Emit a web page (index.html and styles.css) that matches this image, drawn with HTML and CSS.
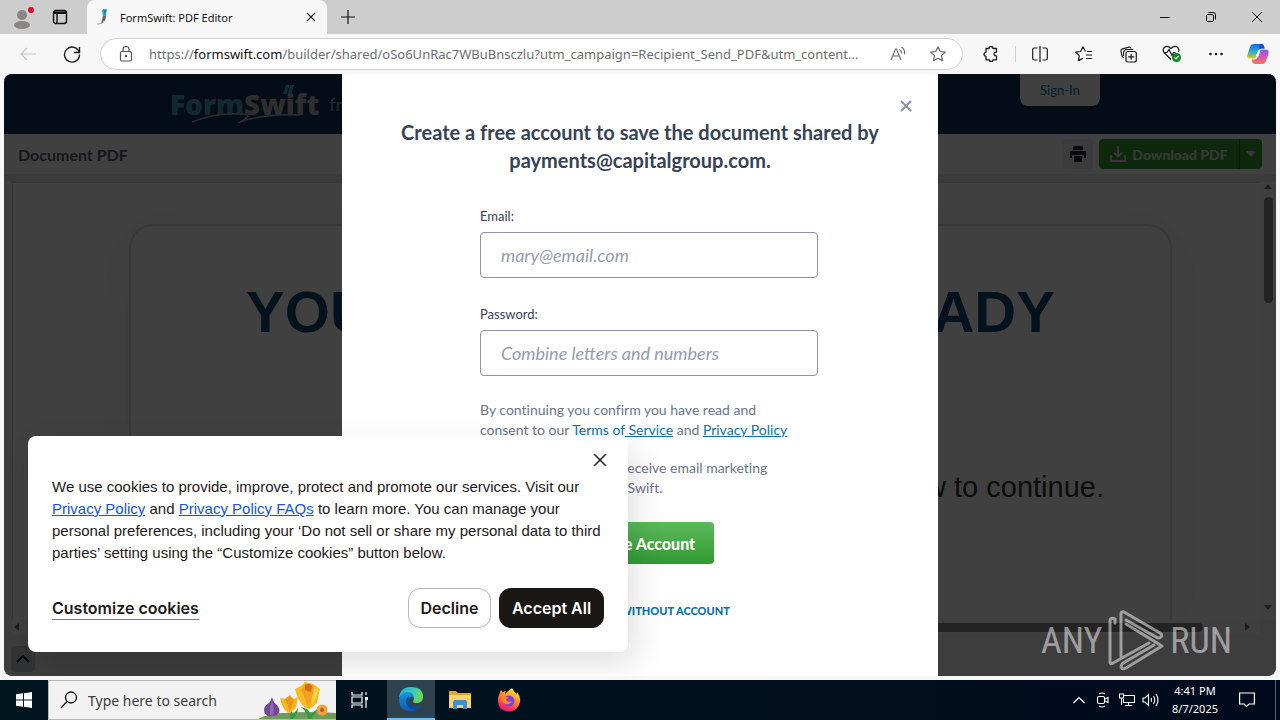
FILE: index.html
```html
<!DOCTYPE html>
<html lang="en">

<head>
    <meta charset="UTF-8">
    <meta name="viewport" content="width=device-width, initial-scale=1.0">
    <title>FormSwift: PDF Editor</title>
    <link rel="stylesheet" href="styles.css">
</head>

<body>
    <!-- Tab strip -->
    <div class="tab-strip">
        <button class="profile" aria-label="Profile">
            <svg width="26" height="26" viewBox="0 0 26 26"><circle cx="11" cy="11" r="5" fill="#8a8684"/><ellipse cx="11" cy="21" rx="8" ry="4" fill="#8a8684"/><circle cx="20" cy="6" r="3" fill="#d80f28"/></svg>
        </button>
        <button class="workspaces" aria-label="Tab actions">
            <svg width="16" height="16" viewBox="0 0 16 16" fill="none" stroke="#111" stroke-width="1.4"><rect x="1.5" y="1.5" width="13" height="13" rx="2.5"/><path d="M2 3.2h12M2 4.2h12M5 5v9"/></svg>
        </button>
        <div class="tab">
            <svg width="12" height="18" viewBox="0 0 12 18"><path d="M5 2l5-1-1 6-3 1z" fill="#2ba3cb"/><path d="M6 1l3 1-1 5" fill="#197ba8"/><path d="M6 8l3-1c0 4-1 7-5 9z" fill="#5d6367"/><path d="M0 16c3 0 5-1 7-3" fill="none" stroke="#aaa"/></svg>
            <span class="tab-title">FormSwift: PDF Editor</span>
            <button class="tab-close" aria-label="Close tab">
                <svg width="10" height="10" viewBox="0 0 10 10" stroke="#222" stroke-width="1.2"><path d="M1 1l8 8M9 1l-8 8"/></svg>
            </button>
        </div>
        <button class="new-tab" aria-label="New tab">
            <svg width="14" height="14" viewBox="0 0 14 14" stroke="#111" stroke-width="1.2"><path d="M7 0v14M0 7h14"/></svg>
        </button>
        <div class="window-controls">
            <button aria-label="Minimize"><svg width="10" height="10" viewBox="0 0 10 10" stroke="#111"><path d="M0 5.5h10"/></svg></button>
            <button aria-label="Restore"><svg width="10" height="10" viewBox="0 0 10 10" fill="none" stroke="#111"><rect x=".5" y="2.5" width="7" height="7" rx="1.5"/><path d="M2.5.5h5a2 2 0 0 1 2 2v5"/></svg></button>
            <button aria-label="Close"><svg width="10" height="10" viewBox="0 0 10 10" stroke="#111"><path d="M0 0l10 10M10 0L0 10"/></svg></button>
        </div>
    </div>

    <!-- Address bar -->
    <div class="toolbar">
        <button aria-label="Back"><svg width="16" height="14" viewBox="0 0 16 14" fill="none" stroke="#c6c6c6" stroke-width="1.2"><path d="M7 1L1 7l6 6M1 7h15"/></svg></button>
        <button aria-label="Refresh"><svg width="18" height="18" viewBox="0 0 18 18" fill="none" stroke="#1b1b1b" stroke-width="1.4"><path d="M16.2 7.5A7.5 7.5 0 1 0 16.5 9.5M16.5 2v5.5H11"/></svg></button>
        <div class="address">
            <svg class="lock" width="14" height="16" viewBox="0 0 14 16" fill="none" stroke="#555" stroke-width="1.2"><rect x="1.5" y="5.5" width="11" height="9.5" rx="1.5"/><path d="M4 5.5V3.5a3 3 0 0 1 6 0v2"/><circle cx="7" cy="10" r=".7" fill="#333"/></svg>
            <span class="url">https://<b>formswift.com</b>/builder/shared/oSo6UnRac7WBuBnsczlu?utm_campaign=Recipient_Send_PDF&amp;utm_content...</span>
            <button class="address-btn" aria-label="Read aloud"><svg width="16" height="16" viewBox="0 0 16 16" fill="none" stroke="#666" stroke-width="1.1"><path d="M1 14L5.5 3h1L11 14M2.5 10h7M9.5 3.5q2 1.2 2 4M11.5 1q3.5 2 3 7"/></svg></button>
            <button class="address-btn" aria-label="Add to favorites"><svg width="16" height="16" viewBox="0 0 16 16" fill="none" stroke="#666" stroke-width="1.2" stroke-linejoin="round"><path d="M8 .8l2.2 4.7 5.1.6-3.8 3.5 1 5.1L8 12.2l-4.5 2.5 1-5.1L.7 6.1l5.1-.6z"/></svg></button>
        </div>
        <button class="extensions" aria-label="Extensions"><svg width="16" height="16" viewBox="0 0 16 16" fill="none" stroke="#1b1b1b" stroke-width="1.3" stroke-linejoin="round"><path d="M6 2.5a2 2 0 0 1 4 0h3.5v3.7h-.7a1.8 1.8 0 0 0 0 3.6h.7v4h-3.5a1.8 1.8 0 0 1-3.6 0H3V10.3a2 2 0 1 1 0-4V2.5z"/></svg></button>
        <span class="separator"></span>
        <button aria-label="Split screen"><svg width="16" height="16" viewBox="0 0 16 16" fill="none" stroke="#1b1b1b" stroke-width="1.2"><path d="M5.5 2H2.2Q.7 2 .7 3.5v9Q.7 14 2.2 14h3.3M10.5 2h3.3q1.5 0 1.5 1.5v9q0 1.5-1.5 1.5h-3.3M8 0v16"/></svg></button>
        <button aria-label="Favorites"><svg width="18" height="16" viewBox="0 0 18 16" fill="none" stroke="#1b1b1b" stroke-width="1.2" stroke-linejoin="round"><path d="M10.5 5.5L8 .8 5.6 5.5.7 6.2l3.6 3.4-.8 5 4.5-2.3M12 5.5h5M11 9h6M11 12.5h6"/></svg></button>
        <button aria-label="Collections"><svg width="17" height="17" viewBox="0 0 17 17" fill="none" stroke="#1b1b1b" stroke-width="1.2"><path d="M4 12Q2 11 1.8 9.5L1 5Q.8 3.2 2.5 2.8L9 1.2q1.6-.3 2.2 1.3"/><path d="M13 3.5H7.5Q3.5 3.5 3.5 7v3"/><rect x="6" y="5.5" width="10.3" height="10.5" rx="2"/><path d="M11.2 7.8v6M8.2 10.8h6"/></svg></button>
        <button aria-label="Browser essentials"><svg width="20" height="18" viewBox="0 0 20 18" fill="none" stroke="#1b1b1b" stroke-width="1.2"><path d="M9 14.5L2.5 8Q0 5 2.2 2.5 5.5 0 9 3.5q3.5-3.5 6.8-1Q17.5 4.5 16.5 7M1.5 7.5H5l2-3 3 6 1.5-3h2"/><circle cx="14.5" cy="12.5" r="4.5" fill="#0e8420" stroke="none"/><path d="M12.5 12.5l1.5 1.5 2.7-3" stroke="#fff"/></svg></button>
        <button aria-label="Settings and more"><svg width="16" height="4" viewBox="0 0 16 4" fill="#1b1b1b"><circle cx="2.5" cy="2" r="1.3"/><circle cx="8" cy="2" r="1.3"/><circle cx="13.5" cy="2" r="1.3"/></svg></button>
        <button class="copilot" aria-label="Copilot">
            <svg width="22" height="22" viewBox="0 0 22 22">
                <defs>
                    <linearGradient id="cpA" x1="0" y1="0" x2="0" y2="1"><stop offset="0" stop-color="#1568dd"/><stop offset=".5" stop-color="#28a9d8"/><stop offset=".8" stop-color="#8cc152"/><stop offset="1" stop-color="#f5c518"/></linearGradient>
                    <linearGradient id="cpB" x1="0" y1="0" x2="0" y2="1"><stop offset="0" stop-color="#8b5cf0"/><stop offset=".5" stop-color="#d452b8"/><stop offset="1" stop-color="#fb7b3c"/></linearGradient>
                </defs>
                <path d="M7 1h7q2 0 2.6 2l.7 2.5h-3Q12 5.5 11.4 8L10 13q-.7 2.5-3 2.5H3Q-.5 15.5.6 11L3 4Q4 1 7 1z" fill="url(#cpA)"/>
                <path d="M15 21H8q-2 0-2.6-2l-.6-2.5h2.7q2.2 0 3-2.5L12 9q.7-2.5 3-2.5h4q3.5 0 2.4 4.5L19 18q-1 3-4 3z" fill="url(#cpB)"/>
                <path d="M12.5 1h2q2 0 2.5 2l.7 2.5H14q-1.3 0-2 1z" fill="#1a4fc4"/>
                <path d="M11 7.500h2.500L11 14.500H8.500z" fill="#fff"/>
            </svg>
        </button>
    </div>

    <!-- Page -->
    <main class="page">
        <header class="site-header">
            <a class="logo" href="#"><span class="logo-form">Form</span><span class="logo-swift">Swift</span>
                <svg class="logo-mark" width="130" height="40" viewBox="0 0 130 40" fill="none"><path d="M94 0h8l-3 9h-8z" fill="#47b5bd"/><path d="M98 0l-3 9" stroke="#12305c"/><path d="M0 37Q25 27 50 29q12 1-2 8 28-9 60-7Q70 28 46 38" stroke="#a7adb3" stroke-width="1.5"/></svg>
            </a>
            <span class="from">from Dropbox</span>
            <a class="sign-in" href="#">Sign-In</a>
        </header>
        <div class="doc-bar">
            <h1>Document PDF</h1>
            <button class="print" aria-label="Print"><svg width="16" height="16" viewBox="0 0 16 16" fill="#1c2333"><path d="M4 0h8q1 0 1 1v3H3V1q0-1 1-1zM1 5h14q1 0 1 1v6h-2V9H2v3H0V6q0-1 1-1zM4 10h8v5q0 1-1 1H5q-1 0-1-1z"/></svg></button>
            <div class="download-group">
                <button class="download"><svg width="16" height="16" viewBox="0 0 16 16" fill="none" stroke="#ddd" stroke-width="1.8"><path d="M8 0v10M4 6.5l4 4 4-4M1 9v6h14V9"/></svg>Download PDF</button>
                <button class="download-more" aria-label="More formats"><svg width="10" height="6" viewBox="0 0 10 6" fill="#ddd"><path d="M0 0h10L5 6z"/></svg></button>
            </div>
        </div>
        <div class="viewer">
            <div class="sheet">
                <div class="card">
                    <h2>YOUR DOCUMENT IS READY</h2>
                    <p>Please review it below to continue.</p>
                </div>
            </div>
            <div class="scroll-v">
                <svg width="8" height="5" viewBox="0 0 8 5"><path d="M0 5h8L4 0z"/></svg>
                <span class="thumb"></span>
                <svg class="arrow-end" width="8" height="5" viewBox="0 0 8 5"><path d="M0 0h8L4 5z"/></svg>
            </div>
            <div class="scroll-h">
                <svg width="5" height="8" viewBox="0 0 5 8"><path d="M5 0v8L0 4z"/></svg>
                <span class="thumb"></span>
                <svg class="arrow-end" width="5" height="8" viewBox="0 0 5 8"><path d="M0 0v8l5-4z"/></svg>
            </div>
        </div>
        <footer class="site-footer">
            <button aria-label="Expand"><svg width="14" height="8" viewBox="0 0 14 8" fill="none" stroke="#101c30" stroke-width="2"><path d="M1 7l6-6 6 6"/></svg></button>
        </footer>

        <div class="backdrop"></div>

        <!-- Sign up modal -->
        <section class="modal">
            <button class="modal-close" aria-label="Close"><svg width="12" height="12" viewBox="0 0 12 12" stroke="#8791a6" stroke-width="2"><path d="M1 1l10 10M11 1L1 11"/></svg></button>
            <h2>Create a free account to save the document shared by payments@capitalgroup.com.</h2>
            <form>
                <label for="email">Email:</label>
                <input id="email" type="email" placeholder="mary@email.com">
                <label for="password">Password:</label>
                <input id="password" type="password" placeholder="Combine letters and numbers">
                <p>By continuing you confirm you have read and<br>consent to our <a href="#">Terms of<u> Service</u></a> and <a href="#"><u>Privacy Policy</u></a></p>
                <p>You agree that you will receive email marketing<br>communication by FormSwift.</p>
                <button class="create" type="button">Create Account</button>
                <a class="skip" href="#">DOWNLOAD WITHOUT ACCOUNT</a>
            </form>
        </section>

        <!-- Cookie banner -->
        <section class="cookies">
            <button class="cookies-close" aria-label="Close"><svg width="12" height="12" viewBox="0 0 12 12" stroke="#1e1919" stroke-width="1.5"><path d="M0 0l12 12M12 0L0 12"/></svg></button>
            <p>We use cookies to provide, improve, protect and promote our services. Visit our<br><a href="#">Privacy Policy</a> and <a href="#">Privacy Policy FAQs</a> to learn more. You can manage your<br>personal preferences, including your ‘Do not sell or share my personal data to third<br>parties’ setting using the “Customize cookies” button below.</p>
            <div class="cookies-actions">
                <button class="customize">Customize cookies</button>
                <button class="decline">Decline</button>
                <button class="accept">Accept All</button>
            </div>
        </section>

        <div class="watermark">
            <span>ANY</span>
            <svg width="56" height="62" viewBox="0 0 56 62" fill="none" stroke="#fff" stroke-width="3" stroke-linejoin="round" stroke-linecap="round"><path d="M13 46V4q0-3 3-2l36 21q3 2 1 4t-5 0L18 10M7 9Q2 7 2 11v41q0 3 3 1l36-20M7 9v4M18 14l36 22-36 22q-4 2-5-1M13 57q0-3 4-5l29-17"/></svg>
            <span>RUN</span>
        </div>
    </main>

    <!-- Taskbar -->
    <nav class="taskbar">
        <button class="start" aria-label="Start"><svg width="16" height="16" viewBox="0 0 16 16" fill="#fff"><path d="M0 2.3L7 1.3v6.3H0zM8 1.2L16 0v7.6H8zM0 8.4h7v6.3l-7-1zM8 8.4h8V16l-8-1.2z"/></svg></button>
        <div class="search">
            <svg width="18" height="18" viewBox="0 0 18 18" fill="none" stroke="#111" stroke-width="1.3"><circle cx="11" cy="6.5" r="5.5"/><path d="M7 10.5L1 17"/></svg>
            <input type="text" aria-label="Search" placeholder="Type here to search">
            <svg class="flowers" width="80" height="38" viewBox="0 0 80 38">
                <path d="M2 38Q14 31 30 32q22-2 50 0v6z" fill="#6e9a5a"/>
                <path d="M34 38q1-6-2-9l3-1 2 6 5-7q0 6-5 11zM52 38q0-6-7-12l6 2q3 3 4 6 5-7 12-7-10 5-12 11z" fill="#2f9b43"/>
                <path d="M16 16q1 5 5 8 6 8-3 11-10 1-10-6 0-4 5-7 2-2 3-6z" fill="#6d4a92"/><path d="M16 20q-3 6-2 14l3 1q2-8-1-15z" fill="#8c68b2"/>
                <path d="M24 17l5 1 5-4 4 4 4-2-2 11-6 5q-7-1-10-15z" fill="#f9b41e"/><path d="M29 18l4-3 5 4-4 11z" fill="#ed941b"/>
                <path d="M39 8l6-3 4-4 8 2 7 5-3 14-7 6q-10-1-15-20z" fill="#fbbb20"/><path d="M45 9l5-7 7 2 1 6-5 17z" fill="#f3a01d"/><path d="M49 4q4-3 7 1l-1 6-6-2z" fill="#db6818"/><path d="M58 7l5 2-8 18z" fill="#ffd248"/>
                <circle cx="66" cy="29" r="5.5" fill="#f1a33b"/><circle cx="66" cy="29" r="2" fill="#b85c17"/>
            </svg>
        </div>
        <button class="task-view" aria-label="Task view"><svg width="18" height="16" viewBox="0 0 18 16" fill="none" stroke="#fff" stroke-width="1.2"><path d="M1 0v3h10V0M1 16v-3h10v3M1 5h10v6H1zM15 0v3M15 8v8"/><path d="M14 5h3v3h-3z" fill="#fff" stroke="none"/></svg></button>
        <button class="app active" aria-label="Microsoft Edge">
            <svg width="24" height="24" viewBox="0 0 24 24">
                <defs>
                    <linearGradient id="edA" x1="0" y1="0" x2="1" y2=".4"><stop offset="0" stop-color="#22a8e8"/><stop offset=".6" stop-color="#38cfb8"/><stop offset="1" stop-color="#68d957"/></linearGradient>
                    <linearGradient id="edB" x1="0" y1="0" x2="0" y2="1"><stop offset="0" stop-color="#1795dd"/><stop offset="1" stop-color="#0d59b4"/></linearGradient>
                </defs>
                <path d="M0 11Q1 0 12 0q12 0 12 10 0 6-7 6-4 0-2.5-2.5Q16 10 12 7 5 3 0 11z" fill="url(#edA)"/>
                <path d="M0 12q2-7 8-7 6 0 7 5-6-1-6 5 1 6 8 5 3 0 5-2-4 6-10 6Q0 24 0 12z" fill="url(#edB)"/>
                <path d="M10 9Q5 12 8 18q3 5 9 5 4-2 6-5-6 3-11 0-4-3-2-9z" fill="#0c4a9c"/>
            </svg>
        </button>
        <button class="app" aria-label="File Explorer">
            <svg width="22" height="20" viewBox="0 0 22 20"><path d="M0 2Q0 1 1 1h6l2 2h12q1 0 1 1v14H0z" fill="#e9a620"/><path d="M0 5h22v13H0z" fill="#fbd46a"/><path d="M4 19v-7q0-2 2-2h10q2 0 2 2v7h-4v-4H8v4z" fill="#3f8fd0"/></svg>
        </button>
        <button class="app" aria-label="Firefox">
            <svg width="24" height="24" viewBox="0 0 24 24">
                <defs><linearGradient id="ff" x1=".8" y1="0" x2=".3" y2="1"><stop offset="0" stop-color="#fff04a"/><stop offset=".4" stop-color="#ff9a1f"/><stop offset=".75" stop-color="#ff3f4c"/><stop offset="1" stop-color="#e31587"/></linearGradient></defs>
                <path d="M15 0q2 4 5 6-.5-1 0-2 4 5 3 10-2 9-11 9.5Q2 23 1 14q-.5-5 2-9 0-2 1-3 1 1 1.5 2.5Q7 3 9 3q-1 1-1 3 4-4 7-6z" fill="url(#ff)"/>
                <circle cx="12" cy="13" r="5.5" fill="#7f3fe0"/><path d="M4 10q4-2 8 0-3 0-3 2 2 3 6 1-2 4-6 3-4-1-5-6z" fill="#ff8a1d"/>
            </svg>
        </button>
        <div class="tray">
            <button aria-label="Show hidden icons"><svg width="12" height="8" viewBox="0 0 12 8" fill="none" stroke="#fff" stroke-width="1.2"><path d="M.5 7L6 1.5 11.5 7"/></svg></button>
            <button aria-label="Meet now"><svg width="14" height="16" viewBox="0 0 14 16" fill="none" stroke="#fff" stroke-width="1.1"><rect x="1.5" y="4.5" width="7" height="7" rx="1.5"/><path d="M9 7l3-1.5v5L9 9M3 2q3-2 6 0M3 14q3 2 6 0"/></svg></button>
            <button aria-label="Network"><svg width="16" height="14" viewBox="0 0 16 14" fill="none" stroke="#fff" stroke-width="1.1"><path d="M5 2.5h10.5v7H4.5V6M9.5 9.5v3M6 12.5h7M.5 1h4v4h-4zM2.5 5v7"/></svg></button>
            <button aria-label="Volume"><svg width="18" height="14" viewBox="0 0 18 14" fill="none" stroke="#fff" stroke-width="1.1"><path d="M1 5h2l3.5-3.5v11L3 9H1zM9 5q1 2 0 4M11.5 3q2.5 4 0 8M14 1q4 6 0 12"/></svg></button>
            <div class="clock"><span>4:41 PM</span><span>8/7/2025</span></div>
            <button class="notifications" aria-label="Notifications"><svg width="16" height="16" viewBox="0 0 16 16" fill="none" stroke="#fff" stroke-width="1.2"><path d="M.6 1h14.8v11H10l-2.5 2.5L5 12H.6z"/></svg></button>
            <span class="show-desktop"></span>
        </div>
    </nav>
</body>

</html>
```
FILE: styles.css
```css
* {
    margin: 0;
    padding: 0;
    box-sizing: border-box;
}

body {
    font-family: Lato, sans-serif;
    font-variant-ligatures: none;
    background: #f7f7f7;
    height: 100vh;
    display: flex;
    flex-direction: column;
    overflow: hidden;
}

button {
    background: none;
    border: none;
    font-family: inherit;
    display: flex;
    align-items: center;
    justify-content: center;
    flex-shrink: 0;
    cursor: pointer;
}

svg {
    flex-shrink: 0;
}

/* TAB STRIP */
.tab-strip {
    height: 34px;
    background: #cdcdcd;
    display: flex;
    font-family: "Noto Sans", "Open Sans", sans-serif;
}

.profile {
    width: 48px;
}

.workspaces {
    width: 24px;
}

.tab {
    width: 240px;
    margin-left: 15px;
    padding: 0 10px;
    background: #f7f7f7;
    border-radius: 8px 8px 0 0;
    display: flex;
    align-items: center;
}

.tab-title {
    margin-left: 11px;
    flex: 1;
    font-size: 11px;
    color: #111;
    white-space: nowrap;
}

.tab-close {
    width: 12px;
    height: 24px;
}

.new-tab {
    width: 42px;
}

.window-controls {
    margin-left: auto;
    display: flex;
}

.window-controls button {
    width: 46px;
}

/* TOOLBAR */
.toolbar {
    height: 40px;
    padding: 0 2px 0 6px;
    display: flex;
    align-items: center;
}

.toolbar > button {
    width: 44px;
    height: 32px;
}

.toolbar > .copilot {
    width: 40px;
}

.address {
    flex: 1;
    min-width: 0;
    height: 32px;
    margin: 0 6px;
    padding: 0 4px 0 18px;
    background: #fff;
    border: 1px solid #d2d2d2;
    border-radius: 16px;
    display: flex;
    align-items: center;
}

.url {
    flex: 1;
    min-width: 0;
    margin-left: 16px;
    font-family: "Noto Sans", "Open Sans", sans-serif;
    font-size: 13px;
    color: #6e6e6e;
    white-space: nowrap;
    overflow: hidden;
}

.url b {
    font-weight: 400;
    color: #111;
}

.address-btn {
    width: 40px;
    height: 28px;
}

.separator {
    width: 1px;
    height: 16px;
    margin: 0 2px;
    background: #cfcfcf;
}

/* PAGE */
.page {
    position: relative;
    flex: 1;
    min-height: 0;
    margin: 0 4px 4px;
    border-radius: 8px;
    overflow: hidden;
    background: #fff;
    display: flex;
    flex-direction: column;
}

.site-header {
    height: 60px;
    padding: 0 176px 0 166px;
    background: #12305c;
    display: flex;
    align-items: center;
}

.logo {
    position: relative;
    font-family: "Open Sans", sans-serif;
    font-size: 28px;
    font-weight: 800;
    text-decoration: none;
}

.logo-form {
    color: #47a5b5;
}

.logo-swift {
    color: #b4b8bc;
}

.logo-mark {
    position: absolute;
    left: 22px;
    top: 0;
}

.from {
    margin-left: 10px;
    font-size: 18px;
    color: #979da3;
}

.sign-in {
    align-self: flex-start;
    margin-left: auto;
    width: 80px;
    line-height: 32px;
    text-align: center;
    font-size: 13px;
    color: #0d6fb0;
    background: #fff;
    border-radius: 0 0 8px 8px;
    text-decoration: none;
}

.doc-bar {
    height: 40px;
    padding: 0 14px;
    display: flex;
    align-items: center;
}

.doc-bar h1 {
    flex: 1;
    font-size: 16px;
    color: #5a5d6c;
}

.print {
    width: 30px;
    height: 30px;
    margin-right: 6px;
    background: #eeeef6;
    border-radius: 4px;
}

.download-group {
    display: flex;
    height: 30px;
    background: #35a035;
    border-radius: 4px;
}

.download {
    width: 140px;
    gap: 6px;
    color: #ddd;
    font-size: 14px;
    font-weight: 900;
}

.download-more {
    width: 23px;
    border-left: 1px solid #1b6d1b;
}

.viewer {
    flex: 1;
    min-height: 0;
    display: grid;
    grid-template-columns: 1fr 16px;
    grid-template-rows: 1fr 14px;
    padding-left: 8px;
    background: #f4f4f4;
    border-top: 8px solid #ececec;
}

.sheet {
    background: #fff;
    border: 1px solid #dcdcdc;
    border-width: 1px 0 0 1px;
    padding: 41px 88px 0 116px;
    overflow: hidden;
}

.card {
    height: 100%;
    border: 2px solid #e4e4e4;
    border-bottom: none;
    border-radius: 24px 24px 0 0;
    box-shadow: 0 8px 60px rgba(0, 0, 0, 0.06);
    font-family: "Liberation Sans", Arial, sans-serif;
}

.card h2 {
    margin-top: 52px;
    text-align: center;
    font-size: 58px;
    line-height: 68px;
    white-space: nowrap;
    color: #0f4874;
}

.card p {
    margin-top: 124px;
    padding-right: 66px;
    text-align: right;
    font-size: 29px;
    line-height: 34px;
    color: #333;
}

.scroll-v,
.scroll-h {
    display: flex;
    align-items: center;
    background: #fcfcfc;
    fill: #777;
}

.scroll-v {
    flex-direction: column;
    padding: 2px 0 10px;
    gap: 8px;
}

.scroll-v .thumb {
    width: 9px;
    height: 106px;
    border-radius: 5px;
    background: #8c8c8c;
}

.scroll-h {
    padding: 0 10px 0 2px;
    gap: 10px;
}

.scroll-h .thumb {
    width: 95%;
    height: 9px;
    border-radius: 5px;
    background: #8c8c8c;
}

.scroll-v .arrow-end {
    margin-top: auto;
}

.scroll-h .arrow-end {
    margin-left: auto;
}

.site-footer {
    height: 42px;
    padding: 0 7px;
    display: flex;
    align-items: center;
    background: #f4f4f4;
}

.site-footer button {
    width: 24px;
    height: 26px;
    margin-top: 8px;
    background: #c8ccd4;
    border-radius: 4px;
}

.backdrop {
    position: absolute;
    inset: 0;
    background: rgba(0, 0, 0, 0.75);
}

/* MODAL */
.modal {
    position: absolute;
    top: 0;
    bottom: 0;
    left: 50%;
    width: 596px;
    margin-left: -298px;
    padding: 44px 48px 0;
    background: #fff;
}

.modal-close {
    position: absolute;
    top: 22px;
    right: 22px;
    width: 20px;
    height: 20px;
}

.modal h2 {
    text-align: center;
    font-size: 20px;
    line-height: 28px;
    color: #364257;
}

.modal form {
    margin: 32px 90px 0;
    display: flex;
    flex-direction: column;
}

.modal label {
    font-size: 13px;
    line-height: 20px;
    color: #364257;
}

.modal input + label {
    margin-top: 2px;
}

.modal input {
    width: 338px;
    height: 46px;
    margin: 6px 0 24px;
    padding: 0 20px;
    border: 1px solid #8f95a6;
    border-radius: 4px;
    font-family: inherit;
    font-size: 18px;
    color: #364257;
}

.modal input::placeholder {
    font-style: italic;
    color: #949cb0;
}

.modal p {
    margin-bottom: 18px;
    font-size: 14px;
    line-height: 20px;
    color: #6b7589;
    white-space: nowrap;
}

.modal a {
    color: #0d6fa8;
    text-decoration: none;
}

.modal .create {
    align-self: center;
    width: 148px;
    height: 42px;
    margin: 6px 0 36px;
    color: #fff;
    font-size: 16px;
    font-weight: 900;
    white-space: nowrap;
    background: linear-gradient(#5cba5c, #319a31);
    border-radius: 4px;
}

.modal .skip {
    align-self: center;
    font-size: 11px;
    line-height: 22px;
    font-weight: 900;
}

/* COOKIE BANNER */
.cookies {
    position: absolute;
    left: 24px;
    bottom: 24px;
    width: 600px;
    padding: 40px 24px 24px;
    background: #fff;
    border-radius: 8px;
    box-shadow: 8px 12px 32px rgba(0, 0, 0, 0.12);
    font-family: "Liberation Sans", Arial, sans-serif;
    color: #1e1919;
}

.cookies-close {
    position: absolute;
    top: 14px;
    right: 18px;
    width: 20px;
    height: 20px;
}

.cookies p {
    font-size: 15px;
    line-height: 22px;
    white-space: nowrap;
}

.cookies p a {
    color: #0f56e0;
}

.cookies-actions {
    margin-top: 24px;
    display: flex;
    align-items: center;
    gap: 8px;
}

.cookies-actions button {
    height: 40px;
    font-family: Inter, sans-serif;
    font-size: 16px;
    font-weight: 600;
    color: #1e1919;
    white-space: nowrap;
}

.cookies-actions .customize {
    height: 24px;
    margin-right: auto;
    border-bottom: 1px solid #807c7c;
}

.cookies-actions .decline {
    width: 83px;
    border: 1px solid #bbb7b5;
    border-radius: 12px;
}

.cookies-actions .accept {
    width: 105px;
    background: #1a1715;
    color: #fff;
    border-radius: 12px;
}

/* WATERMARK */
.watermark {
    position: absolute;
    right: 44px;
    bottom: 4px;
    display: flex;
    align-items: center;
    gap: 6px;
    font-family: "Roboto Condensed", "Liberation Sans Narrow", Roboto, sans-serif;
    font-size: 36px;
    font-weight: 400;
    color: #fff;
    opacity: 0.5;
}

/* TASKBAR */
.taskbar {
    height: 40px;
    display: flex;
    background: linear-gradient(90deg, #00161f, #000a1c);
    font-family: "Noto Sans", "Open Sans", sans-serif;
}

.start {
    width: 48px;
}

.search {
    width: 288px;
    padding-left: 11px;
    background: #f2f2f2;
    border: 1px solid #b8b8b8;
    border-right: none;
    display: flex;
    align-items: center;
}

.search input {
    flex: 1;
    min-width: 0;
    margin-left: 10px;
    background: none;
    border: none;
    font-family: inherit;
    font-size: 14px;
}

.search input::placeholder {
    color: #3c3c3c;
}

.task-view {
    width: 48px;
    margin-right: 3px;
}

.app {
    width: 48px;
    margin-right: 1px;
}

.app.active {
    background: #2f434e;
    border-bottom: 2px solid #76b9ed;
}

.tray {
    margin-left: auto;
    display: flex;
    color: #fff;
}

.tray button {
    width: 24px;
}

.clock {
    width: 64px;
    display: flex;
    flex-direction: column;
    align-items: center;
    justify-content: center;
    font-size: 11px;
    line-height: 18px;
}

.tray .notifications {
    width: 40px;
}

.show-desktop {
    width: 5px;
    margin-left: 8px;
    border-left: 1px solid #5a6470;
}
```
